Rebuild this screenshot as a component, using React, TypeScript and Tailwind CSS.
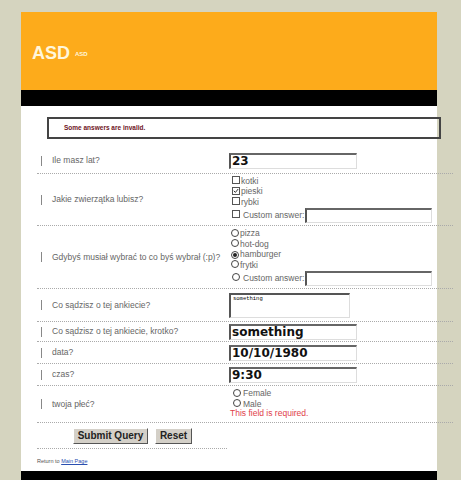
import React from 'react';

const font = { fontFamily: '"Liberation Sans", Arial, sans-serif' };

const Box: React.FC<{ checked?: boolean }> = ({ checked }) => (
  <span className="inline-flex h-[8px] w-[8px] shrink-0 items-center justify-center border border-[#555] bg-white">
    {checked && (
      <svg width="6" height="6" viewBox="0 0 6 6">
        <path d="M0.8 2.8 L2.4 4.4 L5.2 1" stroke="#333" strokeWidth="1" fill="none" />
      </svg>
    )}
  </span>
);

const Radio: React.FC<{ checked?: boolean }> = ({ checked }) => (
  <span className="inline-flex h-[8px] w-[8px] shrink-0 items-center justify-center rounded-full border border-[#444] bg-white">
    {checked && <span className="h-[4px] w-[4px] rounded-full bg-[#222]" />}
  </span>
);

const TextBox: React.FC<{ value?: string; w?: string; h?: string }> = ({ value = '', w = 'w-[128px]', h = 'h-[16px]' }) => (
  <div
    className={`${w} ${h} flex items-center border-t-2 border-l-2 border-r border-b border-t-[#666] border-l-[#555] border-r-[#ddd] border-b-[#ddd] bg-white pl-[1px] text-[12px] font-bold leading-none text-[#111]`}
    style={{ fontFamily: '"DejaVu Sans", Verdana, sans-serif' }}
  >
    {value}
  </div>
);

const Row: React.FC<{ label: string; children: React.ReactNode; cls?: string }> = ({ label, children, cls = '' }) => (
  <div className={`flex border-b border-dotted border-[#aaa] ${cls}`}>
    <div className="flex w-[192px] shrink-0 items-center pl-[4px]">
      <span className="h-[10px] border-l border-[#888]" />
      <span className="ml-[10px] text-[8.5px] text-[#666]">{label}</span>
    </div>
    <div className="flex flex-col justify-center">{children}</div>
  </div>
);

const Opt: React.FC<{ children: React.ReactNode }> = ({ children }) => (
  <div className="flex h-[10.5px] items-center text-[8.5px] leading-none text-[#666]">{children}</div>
);

const btn =
  'h-[16px] whitespace-nowrap border border-t-white border-l-white border-r-[#555] border-b-[#555] bg-[#d4d0c8] px-0 text-[10px] font-bold leading-none text-[#222]';

export default function App() {
  return (
    <div className="min-h-[480px] w-[461px] overflow-hidden bg-[#d5d4bf] pt-[12px]" style={font}>
      <div className="ml-[21px] w-[416px] bg-white">
        <div className="flex h-[78px] items-center bg-[#fdab1b] pl-[11px] pt-[5px]">
          <span className="text-[18px] font-bold text-[#fff6dc]">ASD</span>
          <span className="ml-[5px] mt-[2px] text-[6px] font-bold text-[#fff6dc]">ASD</span>
        </div>
        <div className="h-[16px] bg-black" />

        <div className="pt-[11px]">
          <div className="ml-[26px] flex h-[22px] w-[394px] items-center border-2 border-[#444] pl-[15px] text-[6.5px] font-bold text-[#6e1424]">
            Some answers are invalid.
          </div>

          <div className="ml-[16px] mt-[9px] w-[416px]">
            <Row label="Ile masz lat?" cls="h-[26px]">
              <TextBox value="23" />
            </Row>

            <Row label="Jakie zwierzątka lubisz?" cls="h-[52px]">
              <Opt><span className="ml-[3px]"><Box /></span><span className="ml-[1px]">kotki</span></Opt>
              <Opt><span className="ml-[3px]"><Box checked /></span><span className="ml-[1px]">pieski</span></Opt>
              <Opt><span className="ml-[3px]"><Box /></span><span className="ml-[1px]">rybki</span></Opt>
              <div className="mt-[1px] flex items-center text-[8.5px] text-[#666]">
                <span className="ml-[3px]"><Box /></span>
                <span className="ml-[3px] mr-[1px]">Custom answer:</span>
                <TextBox w="w-[127px]" h="h-[15px]" />
              </div>
            </Row>

            <Row label="Gdybyś musiał wybrać to co byś wybrał (:p)?" cls="h-[63px]">
              <Opt><span className="ml-[2px]"><Radio /></span><span className="ml-[1px]">pizza</span></Opt>
              <Opt><span className="ml-[2px]"><Radio /></span><span className="ml-[1px]">hot-dog</span></Opt>
              <Opt><span className="ml-[2px]"><Radio checked /></span><span className="ml-[1px]">hamburger</span></Opt>
              <Opt><span className="ml-[2px]"><Radio /></span><span className="ml-[1px]">frytki</span></Opt>
              <div className="mt-[1px] flex items-center text-[8.5px] text-[#666]">
                <span className="ml-[3px]"><Radio /></span>
                <span className="ml-[3px] mr-[1px]">Custom answer:</span>
                <TextBox w="w-[127px]" h="h-[15px]" />
              </div>
            </Row>

            <Row label="Co sądzisz o tej ankiecie?" cls="h-[33px]">
              <div className="h-[25px] w-[121px] border-t-2 border-l-2 border-r border-b border-t-[#555] border-l-[#555] border-r-[#ddd] border-b-[#ddd] bg-white pl-[2px] pt-[1px] font-mono text-[5.5px] leading-none text-black">
                something
              </div>
            </Row>

            <Row label="Co sądzisz o tej ankiecie, krotko?" cls="h-[20px]">
              <TextBox value="something" />
            </Row>

            <Row label="data?" cls="h-[22px]">
              <TextBox value="10/10/1980" />
            </Row>

            <Row label="czas?" cls="h-[22px]">
              <TextBox value="9:30" />
            </Row>

            <Row label="twoja płeć?" cls="h-[37px]">
              <Opt><span className="ml-[4px]"><Radio /></span><span className="ml-[2px]">Female</span></Opt>
              <Opt><span className="ml-[4px]"><Radio /></span><span className="ml-[2px]">Male</span></Opt>
              <div className="h-[10.5px] pl-[1px] text-[8.5px] leading-none text-[#e0404a]">This field is required.</div>
            </Row>

            <div className="flex h-[26px] w-[190px] items-center gap-[7px] border-b border-dotted border-[#aaa] pl-[36px]">
              <button className={`${btn} w-[75px]`}>Submit Query</button>
              <button className={`${btn} w-[37px]`}>Reset</button>
            </div>

            <div className="pb-[6px] pt-[8px] text-[5.5px] text-[#555]">
              Return to <span className="text-[#2a4fb0] underline">Main Page</span>
            </div>
          </div>
        </div>
        <div className="h-[10px] bg-black" />
      </div>
    </div>
  );
}
